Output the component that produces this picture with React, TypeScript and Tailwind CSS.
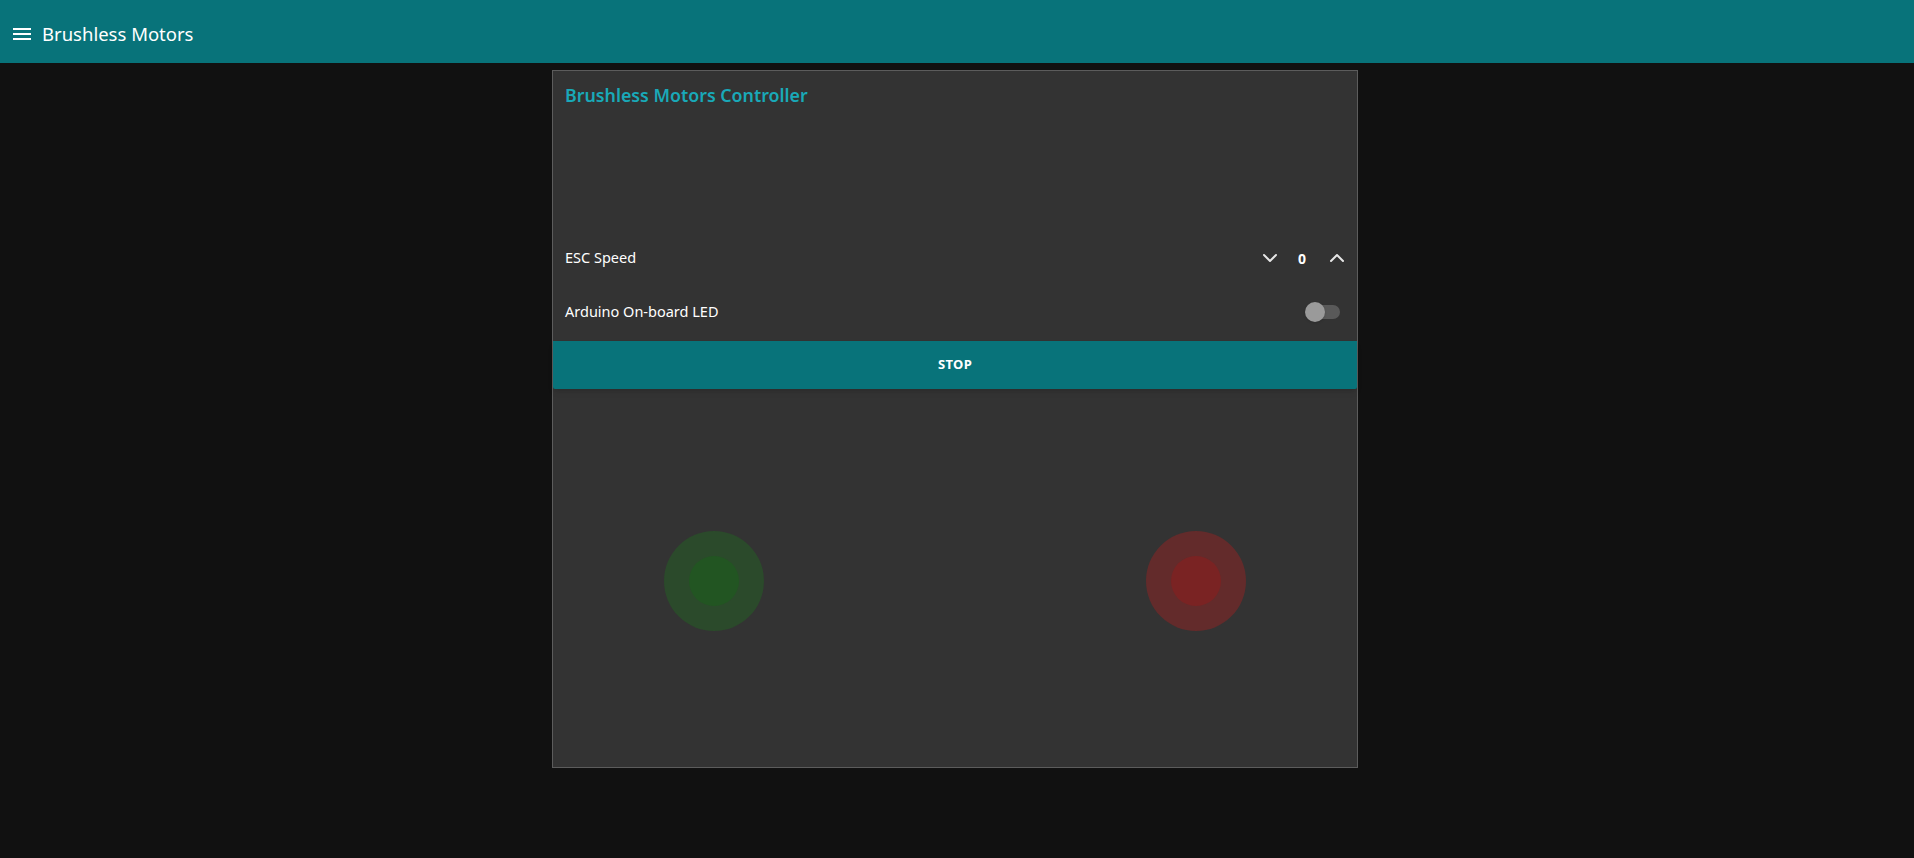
import { ChevronDown, ChevronUp } from 'lucide-react';

function MenuIcon() {
  return (
    <svg width="18" height="12" viewBox="0 0 18 12" className="block">
      <rect x="0" y="0" width="18" height="2" fill="#ffffff" />
      <rect x="0" y="5" width="18" height="2" fill="#ffffff" />
      <rect x="0" y="10" width="18" height="2" fill="#ffffff" />
    </svg>
  );
}

function Toggle() {
  return (
    <div className="relative h-[20px] w-[36px]">
      <div className="absolute left-[1px] top-[3px] h-[14px] w-[34px] rounded-full bg-[#595959]" />
      <div className="absolute left-0 top-0 h-[20px] w-[20px] rounded-full bg-[#9a9a9a] shadow" />
    </div>
  );
}

function Light({ outer, inner }: { outer: string; inner: string }) {
  return (
    <div className={`flex h-[100px] w-[100px] items-center justify-center rounded-full ${outer}`}>
      <div className={`h-[50px] w-[50px] rounded-full ${inner}`} />
    </div>
  );
}

export default function App() {
  return (
    <div className="min-h-[858px] bg-[#111111] font-['Noto_Sans',sans-serif] text-white">
      <header className="flex h-[63px] items-center bg-[#08737a] pl-[13px] pt-[5px]">
        <MenuIcon />
        <h1 className="ml-[11px] text-[18.5px] leading-none">Brushless Motors</h1>
      </header>

      <main className="flex justify-center pr-[4px] pt-[7px]">
        <div className="flex h-[698px] w-[806px] flex-col border border-[#5c5c5c] bg-[#333333]">
          <h2 className="px-[12px] pt-[10px] text-[17.8px] font-semibold leading-[28px] text-[#19a9b8]">
            Brushless Motors Controller
          </h2>
          <div className="h-[122px]" />

          <div className="flex h-[54px] items-center justify-between pl-[12px] pr-[8px]">
            <span className="text-[14.5px]">ESC Speed</span>
            <div className="flex items-center">
              <ChevronDown size={24} strokeWidth={2} className="text-[#e6e6e6]" />
              <span className="ml-[16px] mr-[19px] text-[14px] font-bold">0</span>
              <ChevronUp size={24} strokeWidth={2} className="text-[#e6e6e6]" />
            </div>
          </div>

          <div className="flex h-[54px] items-center justify-between pl-[12px] pr-[16px]">
            <span className="text-[14.5px]">Arduino On-board LED</span>
            <Toggle />
          </div>

          <button className="mt-[2px] h-[48px] w-full rounded-b-[2px] bg-[#08737a] text-[13px] font-bold uppercase tracking-wide shadow-md">
            Stop
          </button>

          <div className="flex flex-1 items-center justify-between px-[111px] pt-[6px]">
            <Light outer="bg-[#2b4a2b]" inner="bg-[#225522]" />
            <Light outer="bg-[#632b2b]" inner="bg-[#7a2323]" />
          </div>
        </div>
      </main>
    </div>
  );
}
